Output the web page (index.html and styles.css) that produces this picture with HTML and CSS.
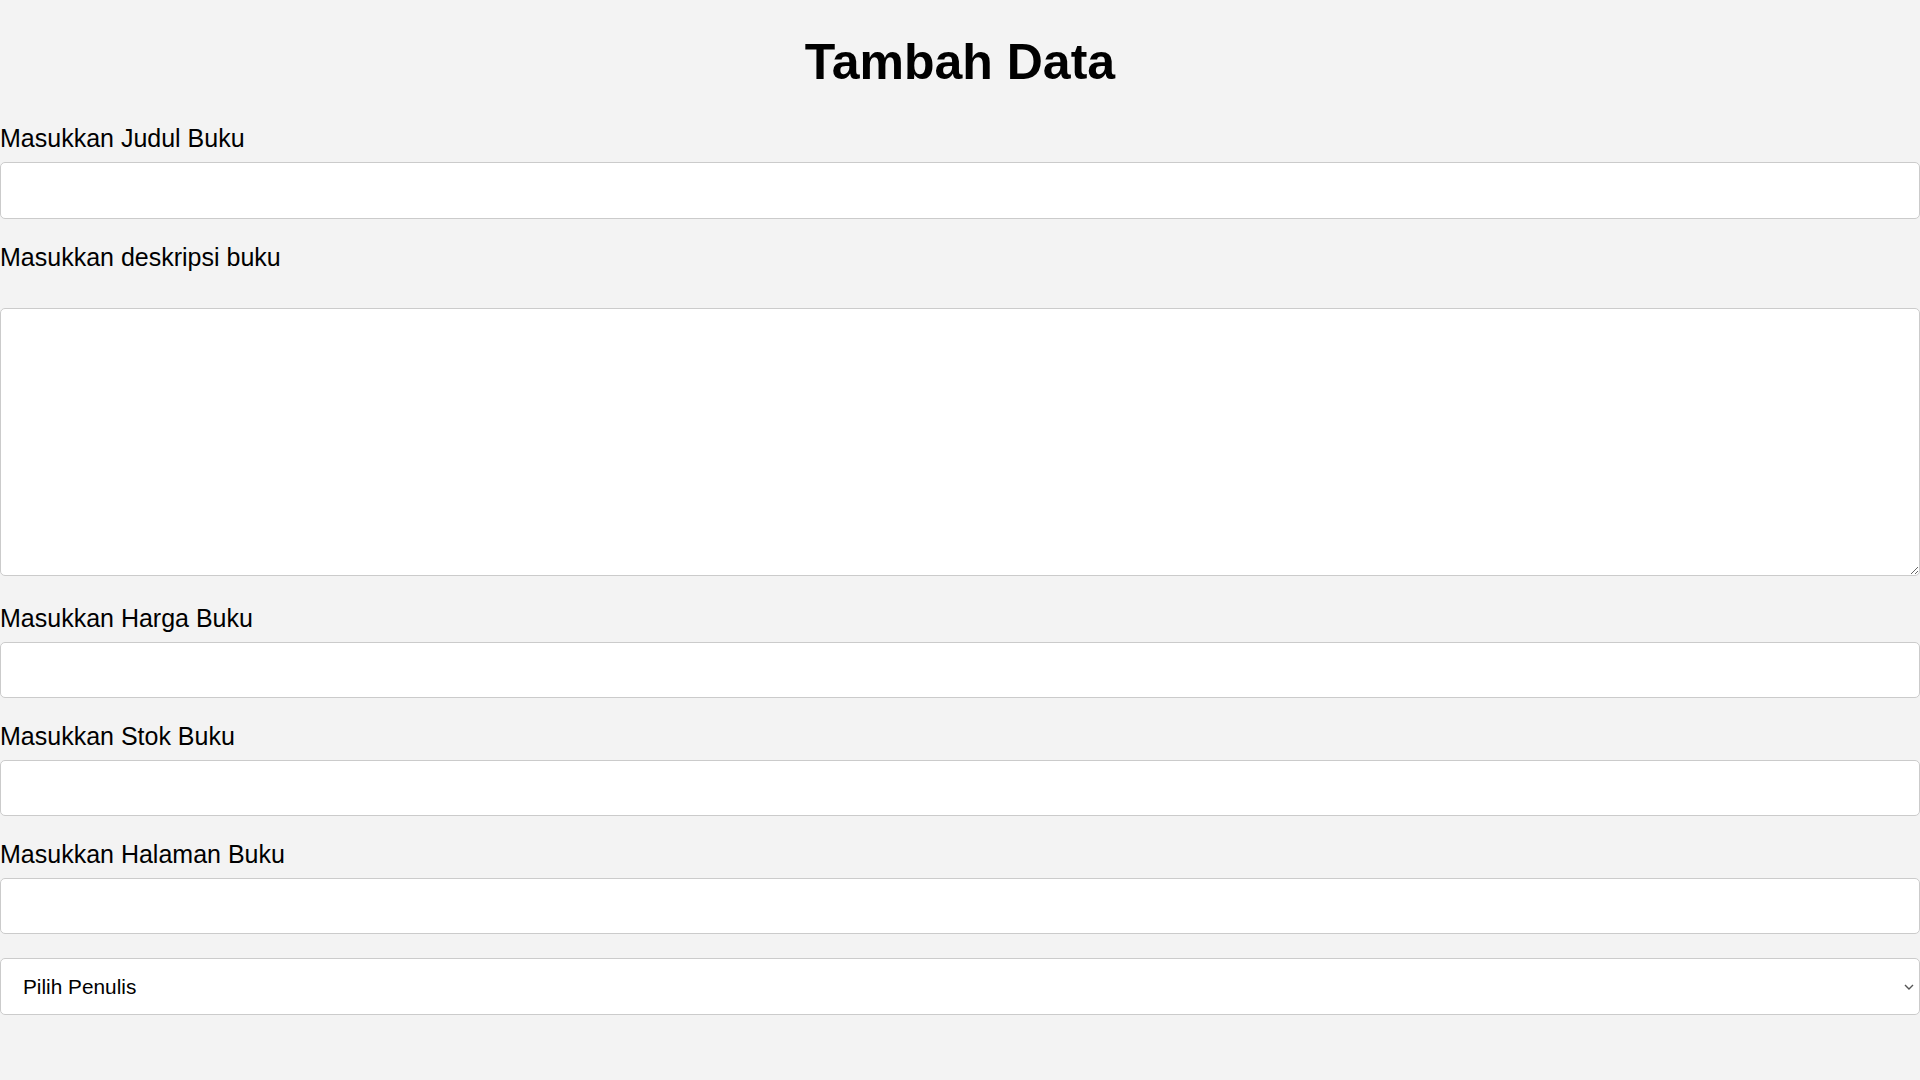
FILE: index.html
```html
<!DOCTYPE html>
<html lang="id">
<head>
<meta charset="utf-8">
<title>Tambah Data</title>
<link rel="stylesheet" href="styles.css">
</head>
<body>
<h1 class="title">Tambah Data</h1>
<form class="form">
  <label class="label" for="judul">Masukkan Judul Buku</label>
  <input class="field field-first" id="judul" type="text">

  <label class="label label-desc" for="deskripsi">Masukkan deskripsi buku</label>
  <textarea class="area" id="deskripsi"></textarea>

  <label class="label" for="harga">Masukkan Harga Buku</label>
  <input class="field" id="harga" type="text">

  <label class="label" for="stok">Masukkan Stok Buku</label>
  <input class="field" id="stok" type="text">

  <label class="label" for="halaman">Masukkan Halaman Buku</label>
  <input class="field field-last" id="halaman" type="text">

  <select class="select" id="penulis">
    <option>Pilih Penulis</option>
  </select>
</form>
</body>
</html>
```

FILE: styles.css
```css
html, body {
  margin: 0;
  padding: 0;
  background: #f3f3f3;
}

body {
  font-family: "Liberation Sans", Arial, sans-serif;
  color: #000;
}

.title {
  margin: 34px 0 33px;
  font-size: 50px;
  line-height: 56px;
  font-weight: bold;
  text-align: center;
}

.form {
  display: flex;
  flex-direction: column;
}

.label {
  display: block;
  font-size: 25px;
  line-height: 30px;
  margin-bottom: 9px;
}

.label-desc {
  margin-bottom: 36px;
}

.field,
.area,
.select {
  box-sizing: border-box;
  width: 100%;
  margin: 0;
  border: 1px solid #cbcbcb;
  border-radius: 5px;
  background-color: #fff;
  font-family: "Liberation Sans", Arial, sans-serif;
  outline: none;
}

.field {
  height: 56px;
  margin-bottom: 23px;
  padding: 0 12px;
  font-size: 20px;
}

.field-first {
  height: 57px;
}

.field-last {
  margin-bottom: 24px;
}

.area {
  display: block;
  height: 268px;
  margin-bottom: 27px;
  padding: 12px;
  font-size: 20px;
  resize: vertical;
}

.select {
  height: 57px;
  padding: 0 0 0 22px;
  font-size: 20.8px;
  color: #000;
  -webkit-appearance: none;
  appearance: none;
  background-image: url("data:image/svg+xml,%3Csvg xmlns='http://www.w3.org/2000/svg' width='10' height='6' viewBox='0 0 10 6'%3E%3Cpath d='M1 1l4 4 4-4' fill='none' stroke='%23555' stroke-width='1.4'/%3E%3C/svg%3E");
  background-repeat: no-repeat;
  background-position: right 5px center;
  background-size: 10px 6px;
}
```
